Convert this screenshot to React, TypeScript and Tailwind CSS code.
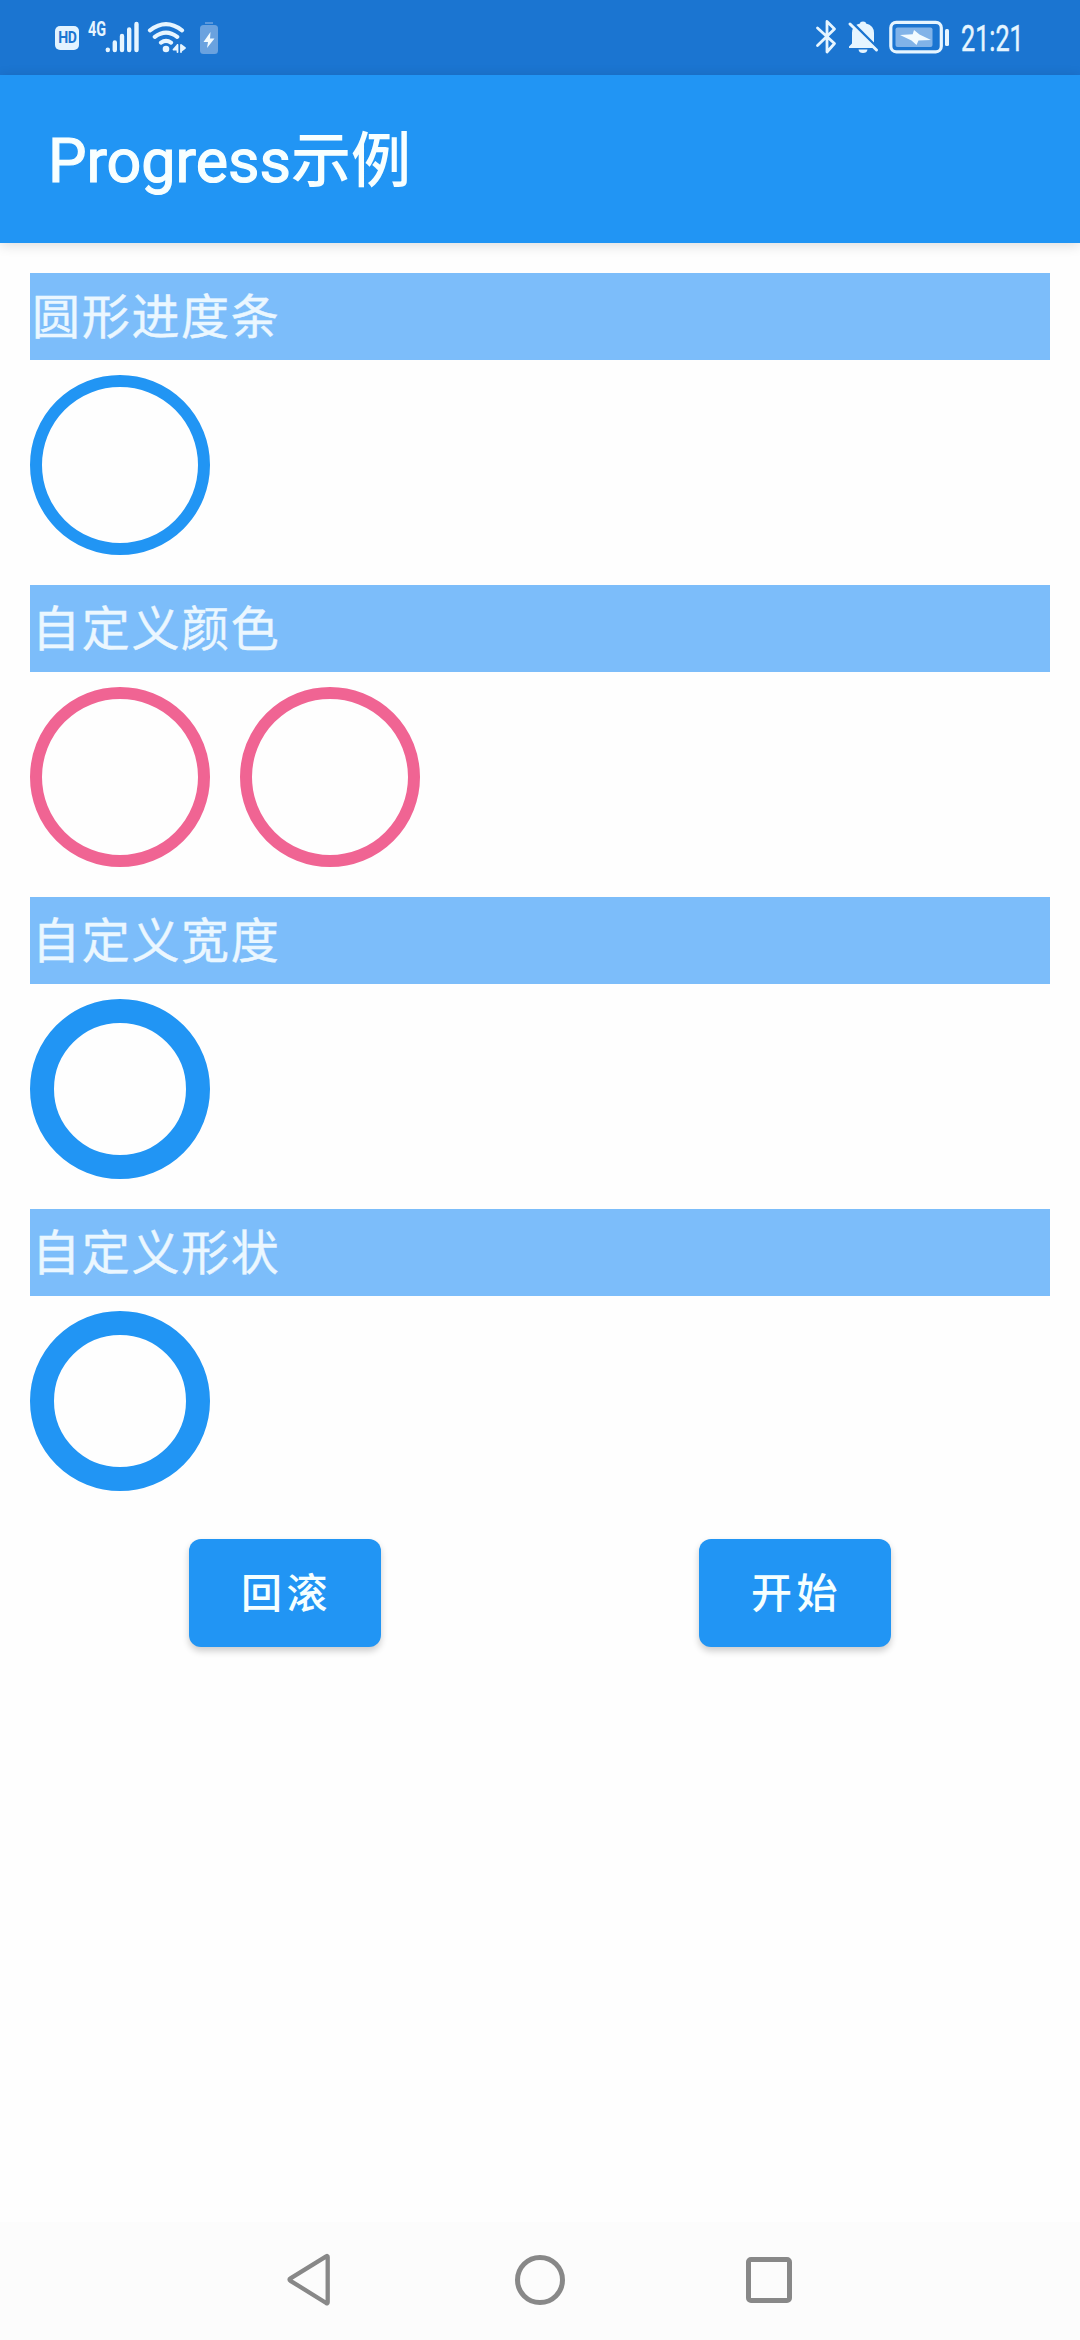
import React from "react";

const sections = [
  { title: "圆形进度条", rings: ["border-[12px] border-[#2195f4]"] },
  {
    title: "自定义颜色",
    rings: ["border-[12px] border-[#f06493]", "border-[12px] border-[#f06493]"],
  },
  { title: "自定义宽度", rings: ["border-[24px] border-[#2195f4]"] },
  { title: "自定义形状", rings: ["border-[24px] border-[#2195f4]"] },
];

function StatusBar() {
  return (
    <div className="flex h-[75px] items-start bg-[#1b75d1] pt-[19px] pr-[55px] pl-[55px] text-[#e6f5ff]">
      <div className="mt-[7px] flex h-6 w-6 items-center justify-center rounded-[5px] bg-[#e2f3ff] text-[#1b75d1]">
        <span className="scale-x-[0.88] text-[16px] leading-none font-bold tracking-[-0.5px]">HD</span>
      </div>
      <div className="ml-[9px] h-[18px] w-[18px]">
        <span className="block origin-top-left scale-x-[0.72] text-[20px] leading-[20px] font-bold">4G</span>
      </div>
      <svg className="-ml-px" width="36" height="36" viewBox="105 19 36 36" fill="none" stroke="currentColor" strokeWidth="4.4" strokeLinecap="round">
        <path d="M107.8 49.6v.4M114.8 42.500v7.500M122 36v14M129.200 29.500v20.500M136.500 24v26" />
      </svg>
      <svg className="ml-[5px]" width="42" height="36" viewBox="146 19 42 36" fill="none" stroke="currentColor" strokeWidth="4.200" strokeLinecap="round">
        <path d="M150 30.300Q166 18 182 30.300M154.800 36.800Q166 28.300 177.200 36.800M161 42.600Q166 39 171 42.600" />
        <circle cx="166" cy="49" r="3.300" fill="currentColor" stroke="none" />
        <path d="M177.500 45v7M177.500 45l-4 4.500h4M181 52v-7l4 3-4 3" strokeWidth="1.800" fill="currentColor" strokeLinejoin="round" />
      </svg>
      <svg className="ml-[11px]" width="20" height="36" viewBox="199 19 20 36">
        <path d="M205 22h8v2h-8z" fill="#5a98dc" />
        <rect x="200" y="25" width="18" height="29" rx="3.500" fill="#6aa2df" />
        <path d="M210.500 32l-7 10h4.500l-1 6 7.500-9.500h-4.500z" fill="#f2fbff" />
      </svg>

      <svg className="ml-auto" width="22" height="36" viewBox="815 19 22 36" fill="none" stroke="currentColor" strokeWidth="2.800" strokeLinecap="round" strokeLinejoin="round">
        <path d="M817.500 28l17 15.500-7.500 8.500V21.500l7.500 7.500-17 16.500" />
      </svg>
      <svg className="ml-[10px]" width="32" height="36" viewBox="847 19 32 36">
        <path d="M849 48v-1.500l3-3V33q0-7.500 8-9.500 0-2 3-2t3 2q8 2 8 9.500v10.500l3 3V48zM858.500 49.500h9q-.5 3.500-4.500 3.500t-4.500-3.500z" fill="currentColor" />
        <path d="M851 21.500l29 29" stroke="#1b75d1" strokeWidth="3" />
        <path d="M850 24l26.500 26" stroke="currentColor" strokeWidth="3" strokeLinecap="round" />
      </svg>
      <svg className="ml-[10px]" width="61" height="36" viewBox="889 19 61 36">
        <rect x="890.800" y="22.300" width="50.500" height="29.500" rx="5.500" fill="none" stroke="currentColor" strokeWidth="3.200" />
        <rect x="895.500" y="27.500" width="37" height="19.500" rx="2" fill="#81b3e8" />
        <path d="M900 35l12.700-.8 1.300-4.200 5.500 4.500 11.500 5.500-12.500.5-2 4.500-5-4.500z" fill="#f2fbff" />
        <rect x="945" y="29" width="4" height="17" rx="1.500" fill="currentColor" />
      </svg>
      <div className="ml-[11px] h-9 w-[64px]">
        <span className="block origin-left scale-x-[0.7] text-[36px] leading-[40px] whitespace-nowrap [-webkit-text-stroke:0.5px_currentColor]">21:21</span>
      </div>
    </div>
  );
}

function NavigationBar() {
  return (
    <div className="flex h-[118px] items-center bg-[#fcfcfc] pb-[3px] pl-[286px]">
      <svg width="46" height="54" viewBox="286 2256 46 54" fill="none" stroke="#888" strokeWidth="4.300" strokeLinejoin="round">
        <path d="M327.700 2260q0-1.500-1.500-.7L290.500 2281.400q-2 1.200 0 2.400L326.200 2306q1.500.8 1.500-.7z" />
      </svg>
      <div className="ml-[183px] h-[50px] w-[50px] rounded-full border-[5px] border-[#888]" />
      <div className="ml-[181px] h-[46px] w-[46px] rounded-[5px] border-[5px] border-[#888]" />
    </div>
  );
}

function ActionButton({ label }: { label: string }) {
  return (
    <div className="flex flex-1 justify-center">
      <button className="h-[108px] w-[192px] rounded-xl bg-[#2195f4] pt-[3px] pl-[3px] text-[41px] leading-none font-medium tracking-[4.5px] text-[#f5ffff] shadow-[0_4px_7px_rgba(0,0,0,0.2)]">
        {label}
      </button>
    </div>
  );
}

export default function App() {
  return (
    <div className="flex h-[2340px] w-[1080px] flex-col overflow-hidden bg-[#fefefe] font-[Roboto,'Noto_Sans_CJK_SC',sans-serif]">
      <StatusBar />
      <header className="z-10 flex h-[168px] items-center bg-[#2195f4] pt-[5px] pl-12 shadow-[0_2px_12px_rgba(0,0,0,0.14)]">
        <h1 className="text-[60px] leading-none font-medium text-[#f8ffff]">
          <span className="text-[61px] font-normal [-webkit-text-stroke:1.2px_currentColor]">Progress</span>示例
        </h1>
      </header>
      <main className="flex flex-1 flex-col px-[30px] pt-[30px]">
        {sections.map((section) => (
          <section key={section.title} className="mb-[30px]">
            <h2 className="flex h-[87px] items-center bg-[#7cbdfa] pt-0.5 pl-[2px] text-[48px] leading-none tracking-[1.7px] text-[#ebf7ff] [-webkit-text-stroke:0.4px_currentColor]">
              {section.title}
            </h2>
            <div className="mt-[15px] flex gap-[30px]">
              {section.rings.map((ring, i) => (
                <div key={i} className={"h-[180px] w-[180px] rounded-full " + ring} />
              ))}
            </div>
          </section>
        ))}
        <div className="mt-[18px] flex">
          <ActionButton label="回滚" />
          <ActionButton label="开始" />
        </div>
      </main>
      <NavigationBar />
    </div>
  );
}
